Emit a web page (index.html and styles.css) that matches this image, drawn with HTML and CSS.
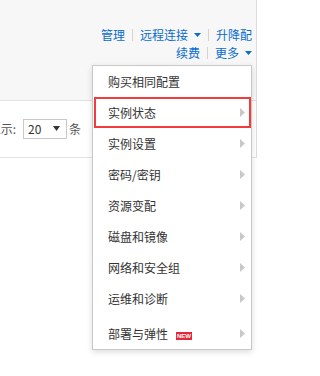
FILE: index.html
```html
<!DOCTYPE html>
<html lang="zh-CN">
<head>
<meta charset="utf-8">
<title>实例操作</title>
<link rel="stylesheet" href="styles.css">
</head>
<body>
<div class="page">
  <div class="panel">
    <div class="header">
      <div class="actions">
        <a class="link">管理</a><span class="sep"></span><a class="link">远程连接<svg class="caret" width="7" height="4" viewBox="0 0 7 4"><path d="M0 0h7L3.5 4z"/></svg></a><span class="sep"></span><a class="link">升降配</a>
      </div>
      <div class="actions">
        <a class="link">续费</a><span class="sep"></span><a class="link">更多<svg class="caret" width="7" height="4" viewBox="0 0 7 4"><path d="M0 0h7L3.5 4z"/></svg></a>
      </div>
    </div>
    <div class="toolbar">
      <div class="pager">
        <span class="pager-label">每页显示:</span>
        <span class="select"><span class="select-value">20</span><svg class="select-caret" width="7" height="5" viewBox="0 0 7 5"><path d="M0 0h7L3.5 5z"/></svg></span>
        <span class="pager-unit">条</span>
      </div>
    </div>
  </div>

  <ul class="menu">
    <li class="menu-item"><span>购买相同配置</span></li>
    <li class="menu-item menu-item--marked"><span>实例状态</span><svg class="sub" width="5" height="9" viewBox="0 0 5 9"><path d="M0 0l5 4.5L0 9z"/></svg></li>
    <li class="menu-item"><span>实例设置</span><svg class="sub" width="5" height="9" viewBox="0 0 5 9"><path d="M0 0l5 4.5L0 9z"/></svg></li>
    <li class="menu-item"><span>密码/密钥</span><svg class="sub" width="5" height="9" viewBox="0 0 5 9"><path d="M0 0l5 4.5L0 9z"/></svg></li>
    <li class="menu-item"><span>资源变配</span><svg class="sub" width="5" height="9" viewBox="0 0 5 9"><path d="M0 0l5 4.5L0 9z"/></svg></li>
    <li class="menu-item"><span>磁盘和镜像</span><svg class="sub" width="5" height="9" viewBox="0 0 5 9"><path d="M0 0l5 4.5L0 9z"/></svg></li>
    <li class="menu-item"><span>网络和安全组</span><svg class="sub" width="5" height="9" viewBox="0 0 5 9"><path d="M0 0l5 4.5L0 9z"/></svg></li>
    <li class="menu-item"><span>运维和诊断</span><svg class="sub" width="5" height="9" viewBox="0 0 5 9"><path d="M0 0l5 4.5L0 9z"/></svg></li>
    <li class="menu-item menu-item--last"><span>部署与弹性<span class="badge">NEW</span></span><svg class="sub" width="5" height="9" viewBox="0 0 5 9"><path d="M0 0l5 4.5L0 9z"/></svg></li>
  </ul>
</div>
</body>
</html>
```

FILE: styles.css
```css
* { box-sizing: border-box; }

html, body {
  margin: 0;
  padding: 0;
  background: #fff;
}

body {
  font-family: "Noto Sans CJK SC", "Noto Sans", sans-serif;
  font-size: 12px;
  color: #333;
}

.page {
  position: relative;
  width: 280px;
  height: 376px;
  overflow: hidden;
}

.panel {
  width: 257px;
  border-right: 1px solid #dedede;
}

.header {
  height: 101px;
  background: #f7f7f7;
  border-bottom: 1px solid #e1e1e1;
  padding: 26px 4px 0 0;
  display: flex;
  flex-direction: column;
  align-items: flex-end;
}

.actions {
  display: flex;
  align-items: center;
  height: 18px;
  line-height: 18px;
  white-space: nowrap;
}

.link {
  color: #0a6ccf;
  display: inline-flex;
  align-items: center;
  cursor: pointer;
}

.caret {
  fill: #0a6ccf;
  margin-left: 6px;
}

.sep {
  width: 1px;
  height: 12px;
  background: #d8d4cc;
  margin: 0 7px;
}

.toolbar {
  height: 57px;
  border-bottom: 1px solid #e3e3e3;
  display: flex;
  align-items: center;
  padding-bottom: 1px;
}

.pager {
  width: 81px;
  display: flex;
  justify-content: flex-end;
  align-items: center;
  overflow: hidden;
  white-space: nowrap;
  color: #555;
}

.pager > * { flex-shrink: 0; }

.pager-label { margin-right: 7px; }

.select {
  width: 44px;
  height: 20px;
  border: 1px solid #c9c9c9;
  background: #fff;
  display: flex;
  align-items: center;
  justify-content: space-between;
  padding: 0 6px 0 4px;
  color: #333;
}

.select-caret { fill: #333; }

.pager-unit { margin-left: 2px; }

.menu {
  position: absolute;
  left: 92px;
  top: 65px;
  width: 160px;
  margin: 0;
  padding: 0;
  list-style: none;
  background: #fff;
  border: 1px solid #c9c9c9;
  box-shadow: 0 2px 6px rgba(0, 0, 0, 0.14);
}

.menu-item {
  height: 31px;
  display: flex;
  align-items: center;
  justify-content: space-between;
  padding: 0 6px 0 15px;
  color: #333;
  white-space: nowrap;
}

.menu-item--marked {
  margin-left: 1px;
  padding-left: 14px;
  box-shadow: inset 0 0 0 2px #f23c3c;
}

.menu-item--last {
  height: 35px;
  padding-top: 3px;
}

.sub { fill: #c8c8c8; }

.badge {
  display: inline-block;
  width: 16px;
  height: 8px;
  margin-left: 8px;
  background: #e2283c;
  color: #fff;
  font-family: "Liberation Sans", sans-serif;
  font-size: 6px;
  font-weight: bold;
  line-height: 8px;
  text-align: center;
  vertical-align: 1px;
}
```
